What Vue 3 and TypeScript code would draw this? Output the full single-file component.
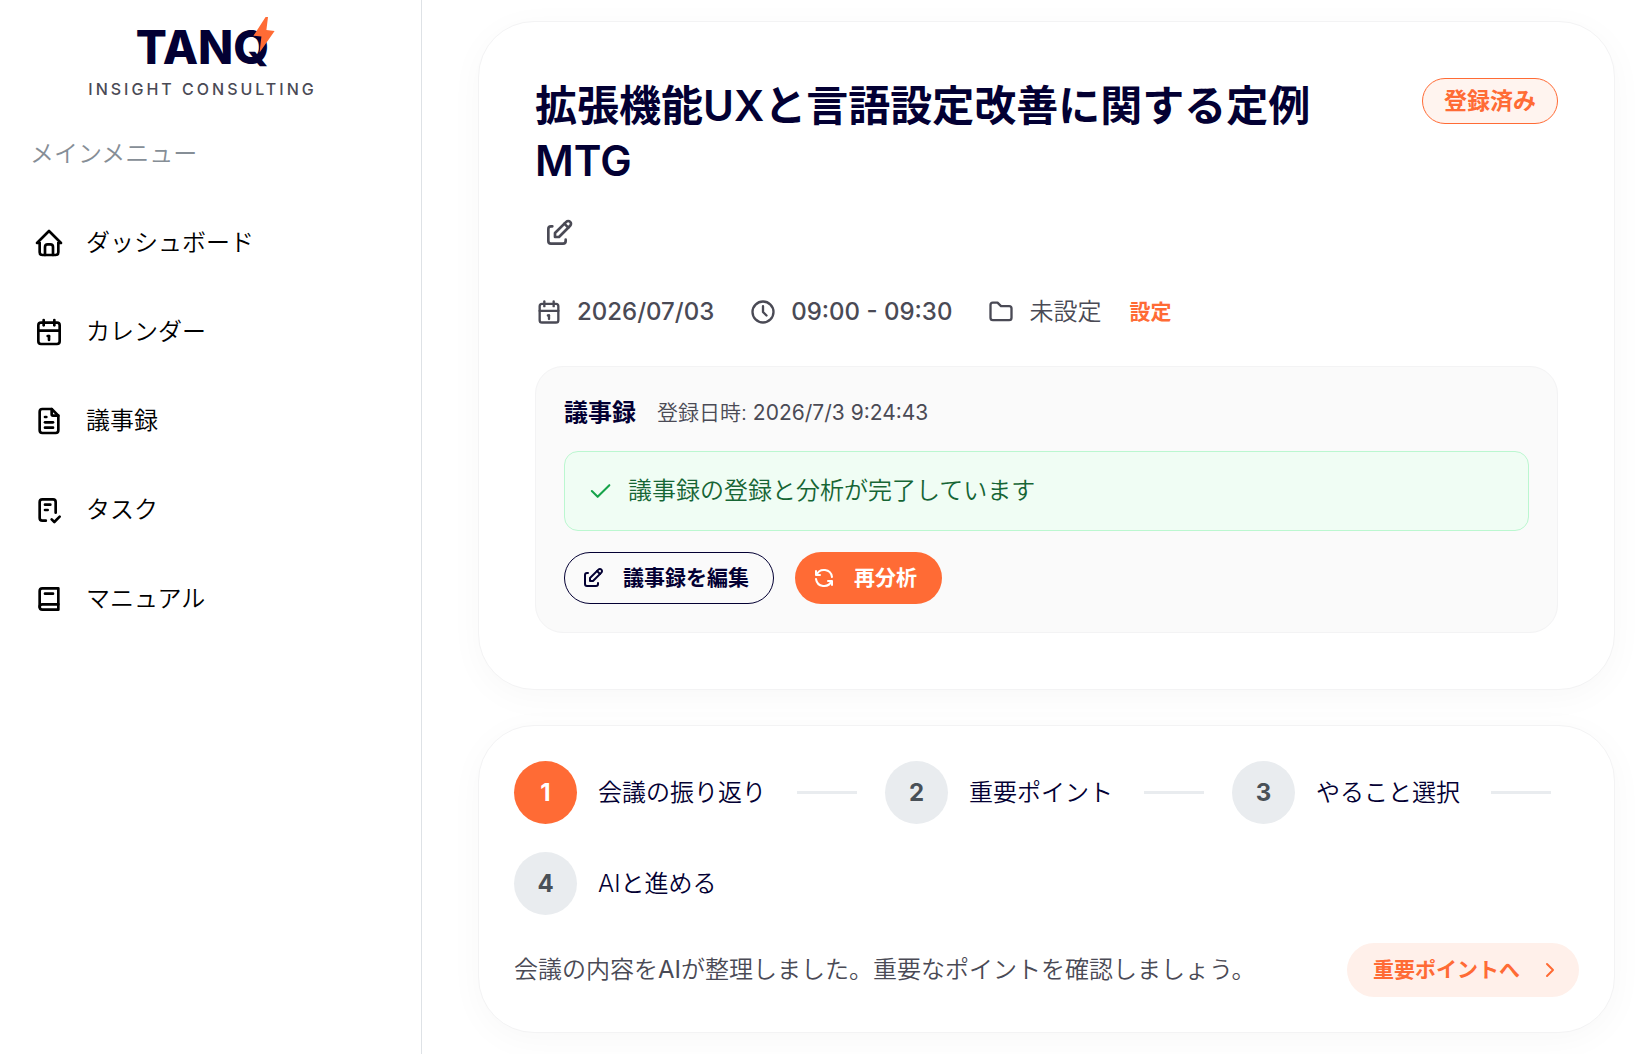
<script setup lang="ts">
interface NavItem {
  label: string
  paths: string[]
}

interface Step {
  label: string
  active: boolean
}

const icons = {
  home: ['M5 12H3l9-9l9 9h-2', 'M5 12v7a2 2 0 0 0 2 2h10a2 2 0 0 0 2-2v-7', 'M9 21v-6a2 2 0 0 1 2-2h2a2 2 0 0 1 2 2v6'],
  calendar: [
    'M4 7a2 2 0 0 1 2-2h12a2 2 0 0 1 2 2v12a2 2 0 0 1-2 2H6a2 2 0 0 1-2-2z',
    'M16 3v4',
    'M8 3v4',
    'M4 11h16',
    'M11 15h1',
    'M12 15v3',
  ],
  file: [
    'M14 3v4a1 1 0 0 0 1 1h4',
    'M17 21H7a2 2 0 0 1-2-2V5a2 2 0 0 1 2-2h7l5 5v11a2 2 0 0 1-2 2z',
    'M9 9h1',
    'M9 13h6',
    'M9 17h6',
  ],
  task: [
    'M9.615 20H7a2 2 0 0 1-2-2V6a2 2 0 0 1 2-2h8a2 2 0 0 1 2 2v8',
    'M14 19l2 2l4-4',
    'M9 8h4',
    'M9 12h2',
  ],
  book: ['M19 4v16H7a2 2 0 0 1-2-2V6a2 2 0 0 1 2-2z', 'M19 16H7a2 2 0 0 0-2 2', 'M9 8h6'],
  edit: [
    'M7 7H6a2 2 0 0 0-2 2v9a2 2 0 0 0 2 2h9a2 2 0 0 0 2-2v-1',
    'M20.385 6.585a2.1 2.1 0 0 0-2.97-2.97L9 12v3h3z',
    'M16 5l3 3',
  ],
  clock: ['M3 12a9 9 0 1 0 18 0a9 9 0 0 0-18 0', 'M12 7v5l3 3'],
  folder: ['M5 4h4l3 3h7a2 2 0 0 1 2 2v8a2 2 0 0 1-2 2H5a2 2 0 0 1-2-2V6a2 2 0 0 1 2-2'],
  check: ['M5 12l5 5l10-10'],
  refresh: ['M20 11a8.1 8.1 0 0 0-15.5-2M4 5v4h4', 'M4 13a8.1 8.1 0 0 0 15.5 2M20 19v-4h-4'],
  chevron: ['M9 6l6 6l-6 6'],
}

const nav: NavItem[] = [
  { label: 'ダッシュボード', paths: icons.home },
  { label: 'カレンダー', paths: icons.calendar },
  { label: '議事録', paths: icons.file },
  { label: 'タスク', paths: icons.task },
  { label: 'マニュアル', paths: icons.book },
]

const steps: Step[] = [
  { label: '会議の振り返り', active: true },
  { label: '重要ポイント', active: false },
  { label: 'やること選択', active: false },
  { label: 'AIと進める', active: false },
]
</script>

<template>
  <div class="app">
    <aside class="sidebar">
      <div class="brand">
        <div class="logo">
          TANQ
          <svg class="bolt" viewBox="0 0 22 37" aria-hidden="true">
            <path d="M12.6 1H15L13.4 14L21.6 15L6.6 36.4L8.4 20.6L0.4 19.8Z" />
          </svg>
        </div>
        <div class="tagline">INSIGHT CONSULTING</div>
      </div>
      <p class="menu-title">メインメニュー</p>
      <nav class="nav">
        <a v-for="item in nav" :key="item.label" href="#" class="nav-item">
          <svg class="icon icon-lg" viewBox="0 0 24 24" aria-hidden="true">
            <path v-for="d in item.paths" :key="d" :d="d" />
          </svg>
          <span>{{ item.label }}</span>
        </a>
      </nav>
    </aside>

    <main class="main">
      <section class="card meeting">
        <header class="head">
          <div class="head-text">
            <h1 class="title">拡張機能UXと言語設定改善に関する定例MTG</h1>
            <button type="button" class="edit-title" aria-label="タイトルを編集">
              <svg class="icon icon-lg" viewBox="0 0 24 24" aria-hidden="true">
                <path v-for="d in icons.edit" :key="d" :d="d" />
              </svg>
            </button>
          </div>
          <span class="badge">登録済み</span>
        </header>

        <div class="meta">
          <span class="meta-item">
            <svg class="icon icon-md" viewBox="0 0 24 24" aria-hidden="true">
              <path v-for="d in icons.calendar" :key="d" :d="d" />
            </svg>
            <span class="num">2026/07/03</span>
          </span>
          <span class="meta-item">
            <svg class="icon icon-md" viewBox="0 0 24 24" aria-hidden="true">
              <path v-for="d in icons.clock" :key="d" :d="d" />
            </svg>
            <span class="num">09:00 - 09:30</span>
          </span>
          <span class="meta-item">
            <svg class="icon icon-md" viewBox="0 0 24 24" aria-hidden="true">
              <path v-for="d in icons.folder" :key="d" :d="d" />
            </svg>
            <span>未設定</span>
            <button type="button" class="link-button">設定</button>
          </span>
        </div>

        <div class="panel">
          <div class="panel-head">
            <h2 class="panel-title">議事録</h2>
            <span class="panel-date">登録日時: <time class="latin">2026/7/3 9:24:43</time></span>
          </div>
          <div class="notice" role="status">
            <svg class="icon icon-md check" viewBox="0 0 24 24" aria-hidden="true">
              <path v-for="d in icons.check" :key="d" :d="d" />
            </svg>
            <span>議事録の登録と分析が完了しています</span>
          </div>
          <div class="actions">
            <button type="button" class="btn btn-outline">
              <svg class="icon icon-sm" viewBox="0 0 24 24" aria-hidden="true">
                <path v-for="d in icons.edit" :key="d" :d="d" />
              </svg>
              議事録を編集
            </button>
            <button type="button" class="btn btn-fill">
              <svg class="icon icon-sm" viewBox="0 0 24 24" aria-hidden="true">
                <path v-for="d in icons.refresh" :key="d" :d="d" />
              </svg>
              再分析
            </button>
          </div>
        </div>
      </section>

      <section class="card progress">
        <ol class="steps">
          <li v-for="(step, i) in steps" :key="step.label" class="step">
            <span class="circle" :class="{ active: step.active }">{{ i + 1 }}</span>
            <span class="step-label">{{ step.label }}</span>
            <span v-if="i < steps.length - 1" class="line"></span>
          </li>
        </ol>
        <div class="next">
          <p class="next-text">会議の内容を<span class="latin">AI</span>が整理しました。重要なポイントを確認しましょう。</p>
          <button type="button" class="btn btn-soft">
            重要ポイントへ
            <svg class="icon icon-sm" viewBox="0 0 24 24" aria-hidden="true">
              <path v-for="d in icons.chevron" :key="d" :d="d" />
            </svg>
          </button>
        </div>
      </section>
    </main>
  </div>
</template>

<style>
body {
  margin: 0;
  background: #fff;
}
</style>

<style scoped>
.app {
  --navy: #030033;
  --orange: #ff6b35;
  --gray: #4a4a55;
  display: flex;
  min-height: 100vh;
  font-family: Inter, 'Noto Sans CJK JP', sans-serif;
  font-size: 24px;
  font-weight: 350;
  line-height: 36px;
  color: var(--gray);
}

h1,
h2,
p,
ol {
  margin: 0;
  padding: 0;
}

button {
  font: inherit;
  color: inherit;
  background: none;
  border: 0;
  padding: 0;
  cursor: pointer;
}

.latin {
  font-weight: 400;
}

.icon {
  flex: none;
  fill: none;
  stroke: currentColor;
  stroke-width: 2;
  stroke-linecap: round;
  stroke-linejoin: round;
}

.icon-lg {
  width: 32px;
  height: 32px;
}

.icon-md {
  width: 28px;
  height: 28px;
}

.icon-sm {
  width: 24px;
  height: 24px;
}

.sidebar {
  flex: none;
  box-sizing: border-box;
  width: 422px;
  border-right: 1px solid #dee2e6;
}

.brand {
  display: flex;
  flex-direction: column;
  align-items: center;
  padding: 17px 16px 0 0;
}

.logo {
  position: relative;
  font-size: 46px;
  font-weight: 800;
  line-height: 60px;
  color: var(--navy);
}

.bolt {
  position: absolute;
  top: -1px;
  right: -6px;
  width: 22px;
  height: 37px;
  fill: var(--orange);
}

.tagline {
  font-size: 16px;
  font-weight: 500;
  line-height: 24px;
  letter-spacing: 3px;
}

.menu-title {
  margin-top: 35px;
  padding-left: 30px;
  color: #868e96;
}

.nav {
  display: flex;
  flex-direction: column;
  gap: 28px;
  margin-top: 40px;
  padding-left: 33px;
}

.nav-item {
  display: flex;
  align-items: center;
  gap: 21px;
  height: 61px;
  color: #000;
  text-decoration: none;
}

.main {
  flex: 1;
  min-width: 0;
  padding: 21px 24px 21px 56px;
  display: flex;
  flex-direction: column;
  gap: 35px;
}

.card {
  border: 1px solid #f3f3f4;
  border-radius: 56px;
  background: #fff;
  box-shadow: 0 7px 35px rgba(0, 0, 0, 0.03);
}

.meeting {
  padding: 56px;
}

.head {
  display: flex;
  justify-content: space-between;
  align-items: flex-start;
  gap: 56px;
}

.title {
  font-size: 42px;
  font-weight: 600;
  line-height: 55px;
  color: var(--navy);
}

.edit-title {
  display: flex;
  margin-top: 29px;
  padding: 0 8px;
}

.badge {
  flex: none;
  border: 1px solid var(--orange);
  border-radius: 28px;
  padding: 4px 21px;
  background: #fff4ef;
  font-size: 23px;
  font-weight: 600;
  color: var(--orange);
}

.meta {
  display: flex;
  flex-wrap: wrap;
  gap: 35px;
  margin-top: 45px;
}

.meta-item {
  display: flex;
  align-items: center;
  gap: 14px;
}

.num {
  font-weight: 500;
}

.link-button {
  margin-left: 14px;
  font-size: 21px;
  font-weight: 600;
  color: var(--orange);
}

.panel {
  margin-top: 36px;
  border: 1px solid #f3f3f4;
  border-radius: 28px;
  padding: 28px;
  background: #fafafa;
}

.panel-head {
  display: flex;
  align-items: center;
  gap: 21px;
}

.panel-title {
  font-size: 24px;
  font-weight: 700;
  color: var(--navy);
}

.panel-date {
  font-size: 21px;
}

.notice {
  display: flex;
  align-items: center;
  gap: 14px;
  margin-top: 20px;
  border: 1px solid #bbf7d0;
  border-radius: 14px;
  padding: 21px;
  background: #f0fdf4;
  color: #166534;
}

.check {
  color: #16a34a;
  stroke-width: 1.75;
}

.actions {
  display: flex;
  gap: 21px;
  margin-top: 21px;
}

.btn {
  display: flex;
  align-items: center;
  gap: 18px;
  border: 1px solid transparent;
  border-radius: 28px;
  padding: 7px 24px 7px 16px;
  font-size: 21px;
  font-weight: 600;
  white-space: nowrap;
}

.btn-outline {
  border-color: var(--navy);
  color: var(--navy);
}

.btn-fill {
  background: var(--orange);
  color: #fff;
}

.btn-soft {
  padding: 8px 16px 8px 25px;
  background: #fff0ea;
  color: var(--orange);
}

.progress {
  padding: 35px;
}

.steps {
  display: flex;
  flex-wrap: wrap;
  gap: 28px;
  list-style: none;
  color: var(--navy);
}

.step {
  display: flex;
  align-items: center;
}

.circle {
  display: flex;
  align-items: center;
  justify-content: center;
  width: 63px;
  height: 63px;
  border-radius: 50%;
  background: #e9ecef;
  font-weight: 700;
  color: #495057;
}

.circle.active {
  background: var(--orange);
  color: #fff;
}

.step-label {
  margin-left: 21px;
}

.line {
  width: 60px;
  height: 3px;
  margin-left: 31px;
  background: #e9ecef;
}

.next {
  display: flex;
  align-items: center;
  justify-content: space-between;
  gap: 28px;
  margin-top: 28px;
}
</style>
